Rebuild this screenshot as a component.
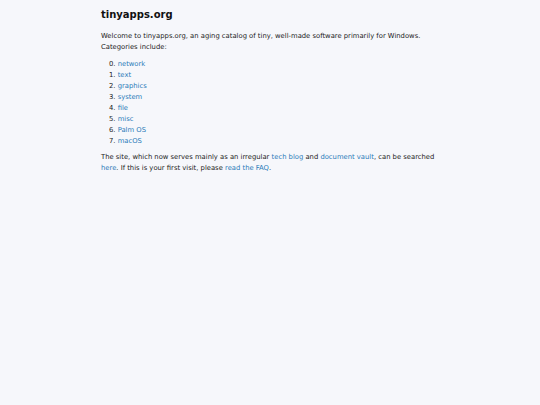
import React from 'react';

const categories = ['network', 'text', 'graphics', 'system', 'file', 'misc', 'Palm OS', 'macOS'];

const A: React.FC<{ children: React.ReactNode }> = ({ children }) => (
    <a href="#" className="text-[#2b7bb9] no-underline">{children}</a>
);

export default function App() {
    return (
        <div className="min-h-[405px] bg-[#f6f7fb] text-[#222] font-['DejaVu_Sans',sans-serif] text-[6.8px] leading-[11px]">
            <div className="mx-auto w-[338px] pt-[8px]">
                <h1 className="text-[10px] leading-[14px] font-bold text-[#111] mb-[9px]">tinyapps.org</h1>
                <p>
                    Welcome to tinyapps.org, an aging catalog of tiny, well-made software primarily for Windows.
                    Categories include:
                </p>
                <ol className="mt-[6px] mb-[5px] pl-[8px]">
                    {categories.map((c, i) => (
                        <li key={c}>
                            {i}. <A>{c}</A>
                        </li>
                    ))}
                </ol>
                <p>
                    The site, which now serves mainly as an irregular <A>tech blog</A> and <A>document vault</A>, can be searched{' '}
                    <A>here</A>. If this is your first visit, please <A>read the FAQ</A>.
                </p>
            </div>
        </div>
    );
}
